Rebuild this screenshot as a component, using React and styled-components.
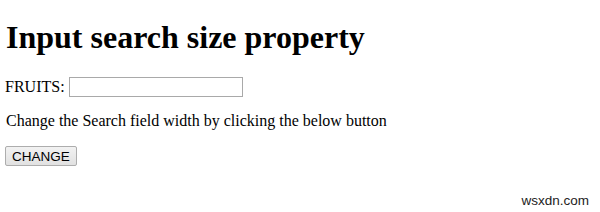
import React from "react";
import styled, { createGlobalStyle } from "styled-components";

const GlobalStyle = createGlobalStyle`
  html, body {
    margin: 0;
    background: #ffffff;
  }
  body {
    font-family: "Liberation Serif", "Times New Roman", serif;
    font-size: 16px;
    color: #000;
  }
`;

const Page = styled.div`
  position: relative;
  width: 600px;
  height: 212px;
  padding: 1px 6px 0 6px;
  box-sizing: border-box;
  overflow: hidden;
`;

const Title = styled.h1`
  font-size: 32px;
  font-weight: bold;
  margin: 18px 0 21px 0;
`;

const Row = styled.div`
  display: flex;
  align-items: center;
  gap: 4px;
  margin: 0 0 15px -1px;
`;

const Label = styled.span`
  font-size: 16px;
`;

const SearchField = styled.input`
  width: 174px;
  height: 20px;
  box-sizing: border-box;
  border: 1px solid #a9a9a9;
  padding: 1px 2px;
  font-size: 13px;
  outline: none;
`;

const Text = styled.p`
  margin: 0 0 16px 0;
`;

const ChangeButton = styled.button`
  margin-left: -1px;
  width: 72px;
  height: 20px;
  padding: 0;
  font-family: "Liberation Sans", Arial, sans-serif;
  font-size: 13.5px;
  color: #000;
  border: 1px solid #adadad;
  border-radius: 2px;
  background: linear-gradient(#f2f2f2, #e1e1e1);
`;

const Watermark = styled.span`
  position: absolute;
  right: 11px;
  bottom: 4px;
  font-family: "Liberation Sans", Arial, sans-serif;
  font-size: 13.5px;
  color: #222;
`;

export default function App() {
  const [size, setSize] = React.useState(174);

  return (
    <>
      <GlobalStyle />
      <Page>
        <Title>Input search size property</Title>
        <Row>
          <Label>FRUITS:</Label>
          <SearchField type="search" style={{ width: size }} />
        </Row>
        <Text>Change the Search field width by clicking the below button</Text>
        <ChangeButton onClick={() => setSize(size)}>CHANGE</ChangeButton>
        <Watermark>wsxdn.com</Watermark>
      </Page>
    </>
  );
}
